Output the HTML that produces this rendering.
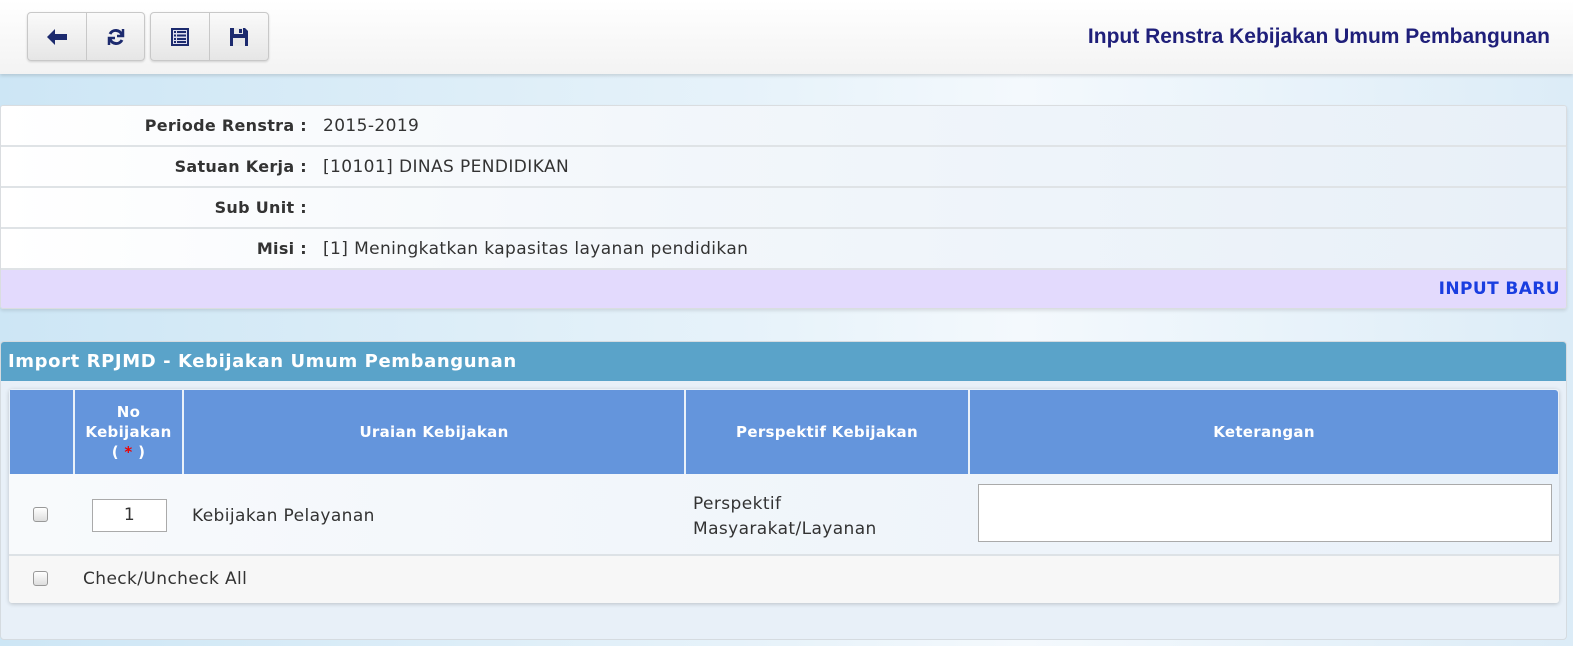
<!DOCTYPE html>
<html><head><meta charset="utf-8"><style>
*{box-sizing:border-box;margin:0;padding:0}
body{width:1573px;height:646px;overflow:hidden;font-family:"DejaVu Sans",Verdana,sans-serif;font-size:17px;letter-spacing:.4px;color:#333;background:linear-gradient(90deg,#cde6f5 0%,#e8f3fa 50%,#f4f9fd 65%,#dcecf7 100%);position:relative}
.top{position:absolute;left:0;top:0;width:1573px;height:74px;background:linear-gradient(#fff,#f3f3f3);box-shadow:0 2px 3px rgba(0,0,0,.12)}
.grp{position:absolute;top:12px;height:49px;border:1px solid #c8c8c8;border-radius:4px;background:linear-gradient(#fafafa,#e6e6e6);display:flex;box-shadow:0 1px 2px rgba(0,0,0,.15)}
.grp div{width:58px;height:47px;display:flex;align-items:center;justify-content:center}
.grp div+div{border-left:1px solid #c8c8c8}
.title{position:absolute;right:23px;top:25px;font-family:"Liberation Sans",Arial,sans-serif;font-weight:bold;font-size:21px;letter-spacing:0;color:#1f1f7a}
.info{position:absolute;left:0;top:105px;width:1567px;height:204px;border:1px solid #dadde0;border-radius:3px;overflow:hidden;box-shadow:0 2px 3px rgba(0,0,0,.1)}
.row{height:41px;border-bottom:2px solid #dfe3e6;background:linear-gradient(90deg,#fff 0%,#f3f7fb 40%,#e8f0f8 100%);position:relative}
.row b{position:absolute;right:1259px;top:10px;font-size:16px;letter-spacing:.3px;color:#333}
.row span{position:absolute;left:322px;top:10px}
.purple{height:40px;background:#e3dafd;text-align:right;padding:9px 6px 0 0;font-weight:bold;color:#1a3ee0;font-size:17px}
.p2{position:absolute;left:0;top:341px;width:1567px;height:299px;border:1px solid #d5dbe0;border-radius:4px;background:#e8f0f8;overflow:hidden}
.p2h{height:39px;background:#5aa3c9;color:#fff;font-weight:bold;font-size:18px;letter-spacing:.6px;padding:9px 0 0 7px}
.tbl{position:absolute;left:8px;top:47px;width:1550px;height:214px;background:#e9f1f9;box-shadow:0 1px 4px rgba(0,0,0,.2);border-radius:3px}
.hd{position:absolute;top:1px;height:84px;background:#6495dc;color:#fff;font-weight:bold;font-size:15px;letter-spacing:.3px;display:flex;align-items:center;justify-content:center;text-align:center;line-height:20px;white-space:nowrap}
.cb{position:absolute;width:15px;height:15px;border:1px solid #999;border-radius:3px;background:linear-gradient(#fff,#ddd)}
</style></head><body>
<div class="top">
 <div class="grp" style="left:27px;width:118px">
  <div><svg width="22" height="18" viewBox="0 0 22 18"><path d="M1 9 L9 1 L9 6 L21 6 L21 12 L9 12 L9 17 Z" fill="#1c2a6e"/></svg></div>
  <div><svg width="20" height="20" viewBox="0 0 20 20" fill="none" stroke="#1c2a6e" stroke-width="3"><path d="M16 8 A6.5 6.5 0 0 0 4 7"/><path d="M4 12 A6.5 6.5 0 0 0 16 13"/><path d="M17 2 V9 H11" stroke-width="2.5"/><path d="M3 18 V11 H9" stroke-width="2.5"/></svg></div>
 </div>
 <div class="grp" style="left:150px;width:119px">
  <div><svg width="20" height="20" viewBox="0 0 20 20"><rect x="1" y="1" width="18" height="18" fill="#1c2a6e"/><rect x="3" y="3" width="14" height="14" fill="#dde"/><g fill="#1c2a6e"><rect x="4" y="4" width="2" height="2"/><rect x="7" y="4" width="9" height="2"/><rect x="4" y="7.5" width="2" height="2"/><rect x="7" y="7.5" width="9" height="2"/><rect x="4" y="11" width="2" height="2"/><rect x="7" y="11" width="9" height="2"/><rect x="4" y="14" width="2" height="2"/><rect x="7" y="14" width="9" height="2"/></g></svg></div>
  <div><svg width="20" height="20" viewBox="0 0 20 20"><path d="M1 1 H16 L19 4 V19 H1 Z" fill="#1c2a6e"/><rect x="5" y="1" width="9" height="6" fill="#e8e8e8"/><rect x="10" y="2" width="3" height="4" fill="#1c2a6e"/><rect x="4" y="11" width="12" height="8" fill="#e8e8e8"/></svg></div>
 </div>
 <div class="title">Input Renstra Kebijakan Umum Pembangunan</div>
</div>
<div class="info">
 <div class="row"><b>Periode Renstra :</b><span>2015-2019</span></div>
 <div class="row"><b>Satuan Kerja :</b><span>[10101] DINAS PENDIDIKAN</span></div>
 <div class="row"><b>Sub Unit :</b></div>
 <div class="row"><b>Misi :</b><span>[1] Meningkatkan kapasitas layanan pendidikan</span></div>
 <div class="purple">INPUT BARU</div>
</div>
<div class="p2">
 <div class="p2h">Import RPJMD - Kebijakan Umum Pembangunan</div>
 <div class="tbl">
  <div class="hd" style="left:1px;width:63px"></div>
  <div class="hd" style="left:66px;width:107px"><div>No<br>Kebijakan<br>( <span style="color:#e00">*</span> )</div></div>
  <div class="hd" style="left:175px;width:500px">Uraian Kebijakan</div>
  <div class="hd" style="left:677px;width:282px">Perspektif Kebijakan</div>
  <div class="hd" style="left:961px;width:588px;border-radius:0 3px 0 0">Keterangan</div>
  <div style="position:absolute;left:0;top:85px;width:1550px;height:82px;background:linear-gradient(90deg,#f8fafc,#e9f1f9);border-bottom:2px solid #dde2e6"></div>
  <div class="cb" style="left:24px;top:118px"></div>
  <div style="position:absolute;left:83px;top:110px;width:75px;height:33px;background:#fff;border:1px solid #aaa;text-align:center;padding-top:5px">1</div>
  <div style="position:absolute;left:183px;top:117px">Kebijakan Pelayanan</div>
  <div style="position:absolute;left:684px;top:103px;line-height:25px">Perspektif<br>Masyarakat/Layanan</div>
  <div style="position:absolute;left:969px;top:95px;width:574px;height:58px;background:#fff;border:1px solid #aaa"></div>
  <div style="position:absolute;left:0;top:167px;width:1550px;height:47px;background:#f7f7f7;border-radius:0 0 3px 3px"></div>
  <div class="cb" style="left:24px;top:182px"></div>
  <div style="position:absolute;left:74px;top:180px">Check/Uncheck All</div>
 </div>
</div>
</body></html>
